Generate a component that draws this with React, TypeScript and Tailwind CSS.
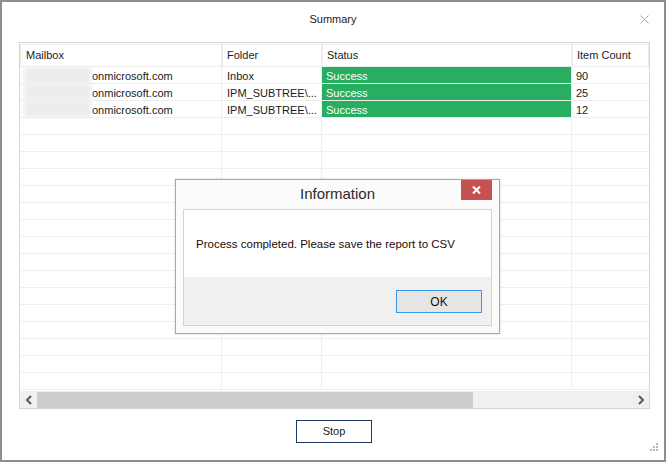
import React from "react";

const FONT = { fontFamily: '"Liberation Sans", Arial, sans-serif' };

const ROWS = [
  { folder: "Inbox", count: "90" },
  { folder: "IPM_SUBTREE\\...", count: "25" },
  { folder: "IPM_SUBTREE\\...", count: "12" },
];

const EMPTY_ROWS = 16;

function Row({ folder, count, filled }: { folder?: string; count?: string; filled: boolean }) {
  return (
    <div className="flex h-[17px] shrink-0 text-[11px] leading-[18px] text-[#1a1a1a]">
      <div className="flex w-[202px] items-stretch border-r border-b border-[#eeeeee] pl-[4px]">
        {filled && (
          <>
            <span className="w-[67px] bg-[#ececec] blur-[2px]" />
            <span className="pl-[1px]">onmicrosoft.com</span>
          </>
        )}
      </div>
      <div className="w-[100px] border-r border-b border-[#eeeeee] pl-[5px]">{folder}</div>
      <div className="w-[250px] border-r border-b border-[#eeeeee]">
        {filled && (
          <div className="h-[16px] bg-[#27ae60] pl-[4px] leading-[18px] text-white">Success</div>
        )}
      </div>
      <div className="flex-1 border-b border-[#eeeeee] pl-[4px]">{count}</div>
    </div>
  );
}

function Chevron({ dir }: { dir: "left" | "right" }) {
  return (
    <svg width="8" height="10" viewBox="0 0 8 10">
      <polyline
        points={dir === "left" ? "6,1 2,5 6,9" : "2,1 6,5 2,9"}
        fill="none"
        stroke="#5a5a5a"
        strokeWidth="2"
      />
    </svg>
  );
}

export default function App() {
  return (
    <div className="relative h-[463px] w-[667px] bg-white" style={FONT}>
      <div className="relative flex h-[462px] w-[666px] flex-col border-2 border-[#8e8e8e] bg-white">
        {/* title */}
        <div className="relative flex h-[40px] shrink-0 items-center justify-center text-[11px] text-[#222]">
          <span className="-mt-[5px]">Summary</span>
          <svg className="absolute right-[15px] top-[13px]" width="9" height="9" viewBox="0 0 9 9">
            <path d="M0.5 0.5 L8.5 8.5 M8.5 0.5 L0.5 8.5" stroke="#a8a8a8" strokeWidth="1" />
          </svg>
        </div>

        {/* grid */}
        <div className="ml-[17px] flex h-[367px] w-[631px] flex-col border border-[#d6d6d6]">
          <div className="flex h-[24px] shrink-0 pt-[1px] text-[11px] text-[#1c1c2c]">
            <div className="flex w-[202px] items-center border border-[#ececec] pl-[5px]">Mailbox</div>
            <div className="flex w-[100px] items-center border border-[#ececec] pl-[4px]">Folder</div>
            <div className="flex w-[250px] items-center border border-[#ececec] pl-[4px]">Status</div>
            <div className="flex flex-1 items-center border border-[#ececec] pl-[4px]">Item Count</div>
          </div>
          <div className="flex flex-1 flex-col overflow-hidden">
            {ROWS.map((r, i) => (
              <Row key={i} folder={r.folder} count={r.count} filled />
            ))}
            {Array.from({ length: EMPTY_ROWS }).map((_, i) => (
              <Row key={`e${i}`} filled={false} />
            ))}
          </div>
          {/* scrollbar */}
          <div className="flex h-[17px] shrink-0 items-center bg-[#f0f0f0]">
            <div className="flex w-[17px] justify-center">
              <Chevron dir="left" />
            </div>
            <div className="h-[16px] w-[436px] bg-[#cdcdcd]" />
            <div className="flex-1" />
            <div className="flex w-[17px] justify-center">
              <Chevron dir="right" />
            </div>
          </div>
        </div>

        {/* stop button */}
        <div className="flex justify-center pt-[11px]">
          <button className="ml-[2px] h-[23px] w-[76px] border border-[#1f3864] bg-white text-[11px] text-[#222]">
            Stop
          </button>
        </div>

        {/* resize grip */}
        <svg className="absolute bottom-[8px] right-[5px]" width="9" height="9" viewBox="0 0 9 9">
          <rect x="6" y="0" width="2" height="2" fill="#b8b8b8" />
          <rect x="3" y="3" width="2" height="2" fill="#b8b8b8" />
          <rect x="6" y="3" width="2" height="2" fill="#b8b8b8" />
          <rect x="0" y="6" width="2" height="2" fill="#b8b8b8" />
          <rect x="3" y="6" width="2" height="2" fill="#b8b8b8" />
          <rect x="6" y="6" width="2" height="2" fill="#b8b8b8" />
        </svg>
      </div>

      {/* information dialog */}
      <div className="absolute left-[175px] top-[179px] flex h-[155px] w-[325px] flex-col border border-[#a9a9a9] bg-[#fbfbfb] shadow-[0_0_2px_rgba(0,0,0,0.2)]">
        <div className="relative flex h-[29px] shrink-0 items-center justify-center">
          <span className="text-[15px] text-[#2b2b2b]">Information</span>
          <div className="absolute right-[7px] top-0 flex h-[20px] w-[31px] items-center justify-center bg-[#c75050]">
            <svg width="9" height="8" viewBox="0 0 9 8">
              <path d="M1 0.5 L8 7.5 M8 0.5 L1 7.5" stroke="white" strokeWidth="2" />
            </svg>
          </div>
        </div>
        <div className="mx-[7px] flex h-[117px] flex-col border border-[#d3d3d3]">
          <div className="flex h-[67px] items-center bg-white pl-[12px] pt-[2px] text-[11.5px] text-[#1a0a0a]">
            Process completed. Please save the report to CSV
          </div>
          <div className="flex flex-1 justify-end bg-[#f0f0f0] pr-[9px] pt-[13px]">
            <button className="h-[23px] w-[86px] border border-[#3a96ea] bg-[#e5e5e5] text-[12px] text-[#111]">
              OK
            </button>
          </div>
        </div>
      </div>
    </div>
  );
}
